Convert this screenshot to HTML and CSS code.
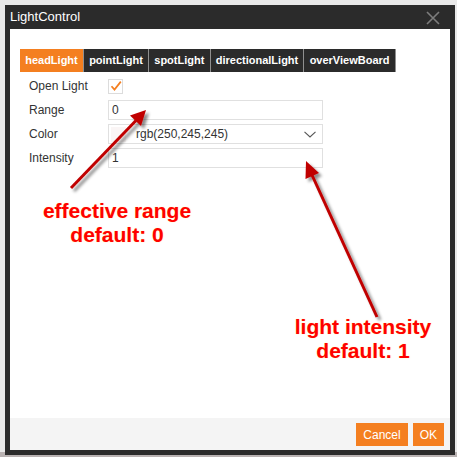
FILE: index.html
```html
<!DOCTYPE html>
<html>
<head>
<meta charset="utf-8">
<link rel="stylesheet" href="styles.css">
</head>
<body>
<div class="page">
  <div class="dialog">
    <div class="titlebar">
      <span class="title">LightControl</span>
      <svg class="close" width="14" height="14" viewBox="0 0 14 14"><path d="M1 1L13 13M13 1L1 13" stroke="#7d7d7d" stroke-width="1.6" fill="none"/></svg>
    </div>
    <div class="body">
      <div class="tabs">
        <div class="tab active">headLight</div>
        <div class="tab">pointLight</div>
        <div class="tab">spotLight</div>
        <div class="tab">directionalLight</div>
        <div class="tab">overViewBoard</div>
      </div>
      <div class="form">
        <div class="row">
          <label class="lbl">Open Light</label>
          <span class="check"><svg width="12" height="12" viewBox="0 0 12 12"><path d="M1.5 6.2L4.5 9.6L10.8 1.6" stroke="#f47f20" stroke-width="1.7" fill="none"/></svg></span>
        </div>
        <div class="row">
          <label class="lbl">Range</label>
          <div class="input">0</div>
        </div>
        <div class="row">
          <label class="lbl">Color</label>
          <div class="input select">
            <span class="swatch"></span>
            <span class="sel-text">rgb(250,245,245)</span>
            <svg class="chev" width="12" height="7" viewBox="0 0 12 7"><path d="M0.5 0.8L6 6L11.5 0.8" stroke="#555" stroke-width="1.1" fill="none"/></svg>
          </div>
        </div>
        <div class="row">
          <label class="lbl">Intensity</label>
          <div class="input">1</div>
        </div>
      </div>
    </div>
    <div class="footer">
      <button class="btn">Cancel</button>
      <button class="btn">OK</button>
    </div>
  </div>

  <svg class="arrows" width="457" height="457" viewBox="0 0 457 457">
    <defs>
      <filter id="sh" x="-20%" y="-20%" width="140%" height="140%">
        <feDropShadow dx="3" dy="3" stdDeviation="1.6" flood-color="#000" flood-opacity="0.45"/>
      </filter>
    </defs>
    <g filter="url(#sh)" fill="#c00000" stroke="#c00000">
      <line x1="71" y1="188" x2="136" y2="120.5" stroke-width="3"/>
      <polygon points="146,110 141,126 130,115.5" stroke="none"/>
      <line x1="377" y1="317" x2="312" y2="175" stroke-width="3"/>
      <polygon points="306,161 319,173 305.5,179" stroke="none"/>
    </g>
  </svg>

  <div class="note note1">effective range<br>default: 0</div>
  <div class="note note2">light intensity<br>default: 1</div>
</div>
</body>
</html>
```

FILE: styles.css
```css
* { box-sizing: border-box; }
html, body { margin: 0; padding: 0; }
body {
  background: #e9e9e9;
  font-family: "Liberation Sans", Arial, sans-serif;
  width: 457px;
  height: 457px;
  overflow: hidden;
}
.page {
  position: relative;
  width: 457px;
  height: 457px;
  padding: 5px 0 0 5px;
  background: linear-gradient(#e9e9e9 0 452px, #b9b2b2 452px);
}
.dialog {
  width: 450px;
  background: #2b2b2b;
  border: 5px solid #2b2b2b;
  border-top: 0;
  display: flex;
  flex-direction: column;
}
.titlebar {
  height: 24px;
  display: flex;
  align-items: center;
  justify-content: space-between;
  padding: 0 10px 0 0;
}
.title {
  color: #fff;
  font-size: 13px;
  line-height: 24px;
}
.close { display: block; margin-top: 1px; }
.body {
  background: #fff;
  height: 389px;
  padding: 20px 10px 0 10px;
}
.tabs {
  display: flex;
  height: 23px;
}
.tab {
  background: #2b2b2b;
  color: #fff;
  font-size: 11px;
  font-weight: bold;
  line-height: 23px;
  padding: 0 5.2px;
  border-right: 1px solid #8f8f8f;
}
.tab.active { background: #f47f20; }
.form {
  padding: 2px 0 0 9px;
}
.row {
  height: 24px;
  display: flex;
  align-items: center;
}
.lbl {
  width: 79px;
  font-size: 12px;
  color: #333;
}
.check {
  width: 15px;
  height: 15px;
  border: 1px solid #dcdcdc;
  display: flex;
  align-items: center;
  justify-content: center;
}
.input {
  width: 215px;
  height: 20px;
  border: 1px solid #e0e0e0;
  font-size: 12px;
  color: #333;
  line-height: 18px;
  padding-left: 3px;
}
.select {
  display: flex;
  align-items: center;
  padding-left: 2px;
}
.swatch {
  width: 15px;
  height: 15px;
  background: rgb(250, 245, 245);
}
.sel-text {
  margin-left: 10px;
  flex: 1;
}
.chev { margin-right: 6px; }
.footer {
  background: #f4f4f4;
  height: 32px;
  display: flex;
  justify-content: flex-end;
  align-items: flex-start;
  gap: 5px;
  padding: 5px 6px 0 0;
}
.btn {
  background: #f47f20;
  color: #fff;
  border: 0;
  height: 23px;
  padding: 0 7px;
  font-family: "Liberation Sans", Arial, sans-serif;
  font-size: 12px;
}
.arrows {
  position: absolute;
  left: 0;
  top: 0;
  pointer-events: none;
}
.note {
  position: absolute;
  color: #ff0000;
  font-weight: bold;
  font-size: 21px;
  line-height: 24px;
  text-align: center;
  width: 200px;
  text-shadow: 0 0 1px rgba(255, 200, 0, 0.5);
}
.note1 { left: 17px; top: 199px; }
.note2 { left: 263px; top: 315px; }
```
